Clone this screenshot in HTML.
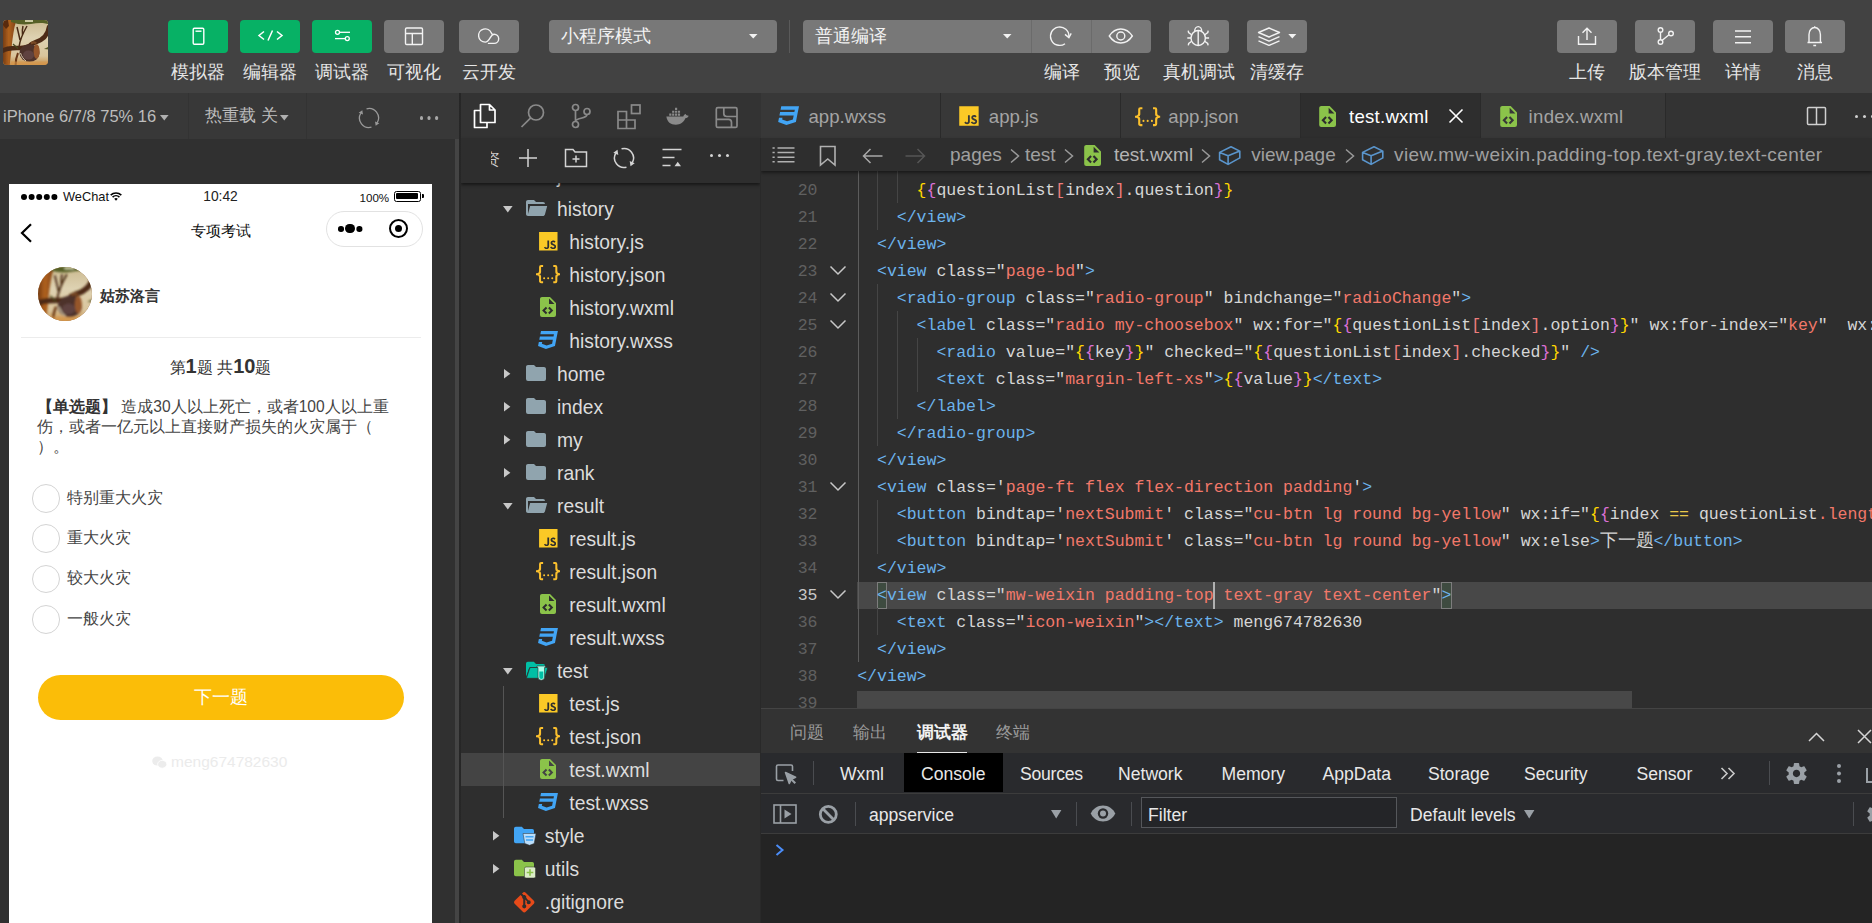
<!DOCTYPE html>
<html><head><meta charset="utf-8">
<style>
*{box-sizing:border-box;margin:0;padding:0}
html,body{width:1872px;height:923px;overflow:hidden;background:#2e2e2e;font-family:"Liberation Sans",sans-serif;}
.abs{position:absolute}
#top{position:absolute;left:0;top:0;width:1872px;height:93px;background:#424242}
.tb{position:absolute;top:20px;height:33px;width:60px;border-radius:4px;background:#787878}
.tb.g{background:#07b165}
.tb svg{position:absolute;left:0;top:0}
.tl{position:absolute;top:59px;height:26px;line-height:26px;font-size:18px;color:#e6e6e6;text-align:center;white-space:nowrap}
.sel{position:absolute;top:20px;height:33px;background:#787878;border-radius:4px;color:#f2f2f2;font-size:18px;line-height:33px;padding-left:12px}
/* simulator */
#sim{position:absolute;left:0;top:93px;width:459px;height:830px;background:#303030}
#simbar{position:absolute;left:0;top:0;width:459px;height:46px;background:#383838}
#phone{position:absolute;left:9px;top:91px;width:423px;height:740px;background:#fff;overflow:hidden}
/* explorer */
#exp{position:absolute;left:461px;top:93px;width:300px;height:830px;background:#2e2e2e;overflow:hidden}
#expicons{position:absolute;left:0;top:0;width:300px;height:45px;background:#333}
.row{position:absolute;left:0;width:299px;height:33px;line-height:35px;font-size:19.300px;color:#dcdcdc;white-space:nowrap}
/* editor */
#ed{position:absolute;left:761px;top:93px;width:1111px;height:615px;background:#2e2e2e;overflow:hidden}
#tabs{position:absolute;left:0;top:0;width:1111px;height:45px;background:#333}
.tab{position:absolute;top:0;height:45px;background:#383838;color:#a4a4a4;font-size:18.600px;line-height:47px;white-space:nowrap;border-right:1px solid #2a2a2a}
.tab.act{background:#2e2e2e;color:#fff}
#crumb{position:absolute;left:0;top:45px;width:1111px;height:33px;background:#2e2e2e;color:#a0a0a0;font-size:19px;line-height:34px;white-space:nowrap;box-shadow:0 2px 3px rgba(0,0,0,.45);z-index:3}
#code{position:absolute;left:0;top:82.500px;width:1111px;height:533px;font-family:"Liberation Mono",monospace;font-size:16.500px;line-height:27px;color:#d6d6d6;white-space:pre}
.ln{position:absolute;left:0;width:1111px;height:27px}
.no{position:absolute;left:0;top:.800px;width:56.500px;text-align:right;color:#606060}
.tx{position:absolute;left:96.200px;top:.800px}
/* bottom */
#bot{position:absolute;left:761px;top:708px;width:1111px;height:215px;background:#242424;overflow:hidden}
#ptabs{position:absolute;left:0;top:0;width:1111px;height:45px;background:#333;border-top:1px solid #444}
#dtabs{position:absolute;left:0;top:45px;width:1111px;height:41px;background:#292a2d;border-bottom:1px solid #3c3c3c;color:#e8e8e8;font-size:18px;line-height:42px}
#ctool{position:absolute;left:0;top:86px;width:1111px;height:40px;background:#292a2d;border-bottom:1px solid #3c3c3c;color:#e8e8e8;font-size:18px;line-height:42px}

.rd{position:absolute;left:22.700px;width:28.800px;height:28.800px;border-radius:50%;border:1px solid #d4d4d4;background:#fff}
.rl{position:absolute;left:58px;height:24px;line-height:24px;font-size:15.750px;color:#444;white-space:nowrap}

.t{color:#6cb3ec}.a{color:#d6d6d6}.s{color:#f2786a}.y{color:#ffd700}.p{color:#da70d6}.r{color:#ef7d7d}.o{color:#e8c84a}

.pt{position:absolute;top:0;height:45px;line-height:47px;font-size:17px;color:#9a9a9a;white-space:nowrap}
#dtabs span,#ctool span{white-space:nowrap;font-size:17.600px}
</style></head><body>
<svg width="0" height="0" style="position:absolute"><defs>
<symbol id="i-av" viewBox="0 0 45 45"><defs><linearGradient id="avg" x1="0" y1="0" x2="0" y2="1"><stop offset="0" stop-color="#cbb98f"/><stop offset=".4" stop-color="#ded2b2"/><stop offset=".8" stop-color="#d9c49c"/><stop offset="1" stop-color="#c9924c"/></linearGradient><linearGradient id="avt" x1="0" y1="0" x2="1" y2="0"><stop offset="0" stop-color="#5e2c0e"/><stop offset=".5" stop-color="#b0621f"/><stop offset="1" stop-color="#7a3f16"/></linearGradient><filter id="avb" x="-10%" y="-10%" width="120%" height="120%"><feGaussianBlur stdDeviation=".7"/></filter></defs>
<rect width="45" height="45" fill="url(#avg)"/>
<g filter="url(#avb)">
<path d="M-2 -2h16l-2.500 9c-1.500 8-2.500 15-3 22l-2 18h-9z" fill="url(#avt)"/>
<path d="M0 0l5 0 1 6-3 3-3-4z" fill="#5a2c10"/>
<path d="M8 -2h39v7c-6-3-13-2-19-1-7 1-13 .5-20-2z" fill="#566026"/>
<path d="M22 0h8v2h-8z" fill="#c9c9a0"/>
<path d="M16 27c1-8 4-14 8-21M17 20c-1-5-2-9-3-13M19.500 15c-.5-4 0-7 .5-9" stroke="#4a2c14" stroke-width="1.500" fill="none"/>
<path d="M46 7c-1 8-6 13-14 15.500-2.500.8-4.500 2-6 4" stroke="#4e2a14" stroke-width="4.600" fill="none" stroke-linecap="round"/>
<path d="M-1 31c5-3.500 11-3 18-3 5 0 9-1.500 13-3" stroke="#4d2a18" stroke-width="4.600" fill="none"/>
<ellipse cx="26.500" cy="33" rx="10" ry="8.800" fill="#4e332c"/>
<ellipse cx="33.600" cy="31.500" rx="3" ry="7.300" fill="#96562a"/>
<ellipse cx="25.500" cy="35" rx="5.500" ry="4.500" fill="#5e4340"/>
<path d="M28 23.500c2-1.500 4-1.500 5 0" stroke="#7a4a28" stroke-width="2.400" fill="none"/>
<path d="M17.500 33c1 3.500 3 6 5.500 8" stroke="#e0d2b4" stroke-width=".9" fill="none"/>
<path d="M12.500 46c0-5 1-9.500 2.500-13" stroke="#6a3818" stroke-width="2" fill="none"/>
<path d="M10 24l5 4.500" stroke="#4a4a20" stroke-width="1.200"/>
<path d="M41 29l5-2.500v3z" fill="#5a5a28"/>
<path d="M8 41.500h40v6h-40z" fill="#d8964a" opacity=".6"/>
</g></symbol>
<symbol id="i-js" viewBox="0 0 24 24"><path fill="#fbc926" d="M3 3h18v18H3V3m4.730 15.040c.4.850 1.190 1.550 2.540 1.550 1.500 0 2.530-.8 2.530-2.550v-5.780h-1.700V17c0 .860-.350 1.080-.9 1.080-.58 0-.82-.4-1.090-.870l-1.380.830m5.980-.180c.5.980 1.510 1.730 3.090 1.730 1.600 0 2.800-.830 2.800-2.360 0-1.410-.81-2.040-2.250-2.660l-.42-.180c-.73-.310-1.040-.520-1.040-1.020 0-.41.310-.73.810-.73.480 0 .8.210 1.090.73l1.310-.870c-.55-.960-1.330-1.330-2.400-1.330-1.510 0-2.480.960-2.480 2.230 0 1.380.81 2.030 2.030 2.550l.42.180c.78.340 1.240.550 1.240 1.130 0 .48-.45.830-1.150.830-.83 0-1.310-.430-1.670-1.030l-1.380.8z" fill-rule="evenodd"/></symbol>
<symbol id="i-json" viewBox="0 0 24 24"><path fill="#fbc02d" d="M5 3h2v2H5v5a2 2 0 0 1-2 2 2 2 0 0 1 2 2v5h2v2H5c-1.070-.270-2-.9-2-2v-4a2 2 0 0 0-2-2H0v-2h1a2 2 0 0 0 2-2V5a2 2 0 0 1 2-2m14 0a2 2 0 0 1 2 2v4a2 2 0 0 0 2 2h1v2h-1a2 2 0 0 0-2 2v4a2 2 0 0 1-2 2h-2v-2h2v-5a2 2 0 0 1 2-2 2 2 0 0 1-2-2V5h-2V3h2m-7 12a1 1 0 0 1 1 1 1 1 0 0 1-1 1 1 1 0 0 1-1-1 1 1 0 0 1 1-1m-4 0a1 1 0 0 1 1 1 1 1 0 0 1-1 1 1 1 0 0 1-1-1 1 1 0 0 1 1-1m8 0a1 1 0 0 1 1 1 1 1 0 0 1-1 1 1 1 0 0 1-1-1 1 1 0 0 1 1-1z"/></symbol>
<symbol id="i-wxml" viewBox="0 0 24 24"><path fill="#8bc34a" fill-rule="evenodd" d="M13 9h5.500L13 3.500V9M6 2h8l6 6v12a2 2 0 0 1-2 2H6a2 2 0 0 1-2-2V4c0-1.110.89-2 2-2m.120 13.500l3.740 3.740 1.420-1.410-2.330-2.330 2.330-2.330-1.420-1.410-3.740 3.740m11.160 0l-3.740-3.740-1.420 1.410 2.330 2.330-2.330 2.330 1.420 1.410 3.740-3.740z"/></symbol>
<symbol id="i-wxss" viewBox="0 0 24 24"><path fill="#42a5f5" d="M5 3l-.65 3.340h13.590L17.500 8.500H3.920l-.66 3.330h13.590l-.76 3.810-5.480 1.810-4.750-1.810.33-1.640H2.850l-.79 4 7.850 3 9.050-3 1.200-6.030.24-1.210L21.940 3H5z"/></symbol>
<symbol id="i-fold" viewBox="0 0 24 24"><path fill="#90a4ae" d="M10 4H4c-1.110 0-2 .89-2 2v12a2 2 0 0 0 2 2h16a2 2 0 0 0 2-2V8c0-1.110-.9-2-2-2h-8l-2-2z"/></symbol>
<symbol id="i-foldo" viewBox="0 0 24 24"><path fill="#90a4ae" d="M19 20H4c-1.110 0-2-.9-2-2V6c0-1.110.89-2 2-2h6l2 2h7a2 2 0 0 1 2 2H4v10l2.140-8h17.070l-2.280 8.500c-.23.870-1.010 1.500-1.930 1.500z"/></symbol>
<symbol id="i-foldtest" viewBox="0 0 24 24"><path d="M2 5.500a1.800 1.800 0 0 1 1.800-1.800h6l2.200 2.300h7.300A1.800 1.800 0 0 1 21 7.800V9H6.800a2 2 0 0 0-1.900 1.400L2 19z" fill="#00bfa5"/><path d="M2.400 20.300L5.600 10.500a1.500 1.500 0 0 1 1.400-1h15.500a1 1 0 0 1 1 1.300l-2.800 8.400a1.600 1.600 0 0 1-1.500 1.100z" fill="#00bfa5" stroke="#2e2e2e" stroke-width=".7"/><path d="M13 8h8.500v1.600h-1v9.400a3.250 3.250 0 0 1-6.500 0V9.600h-1z" fill="#a7ffeb" stroke="#2e2e2e" stroke-width=".6"/><path d="M15.300 13.500h4v5.500a2 2 0 0 1-4 0z" fill="#00bfa5"/></symbol>
<symbol id="i-foldstyle" viewBox="0 0 24 24"><path d="M2 5.500a1.800 1.800 0 0 1 1.800-1.800h6l2.200 2.300h8.300A1.800 1.800 0 0 1 22 7.800V18.500a1.800 1.800 0 0 1-1.800 1.800H3.800A1.800 1.800 0 0 1 2 18.500z" fill="#42a5f5"/><path d="M11 10.500h13l-1.800 10-4.700 1.800-4.700-1.800z" fill="#bbdefb" stroke="#2e2e2e" stroke-width=".5"/><path d="M13.500 13h8v1.400h-8zM14 16.300h7v1.400h-7z" fill="#42a5f5"/></symbol>
<symbol id="i-foldutils" viewBox="0 0 24 24"><path d="M2 5.500a1.800 1.800 0 0 1 1.800-1.800h6l2.200 2.300h8.300A1.800 1.800 0 0 1 22 7.800V18.500a1.800 1.800 0 0 1-1.800 1.800H3.800A1.800 1.800 0 0 1 2 18.500z" fill="#8bc34a"/><rect x="12.500" y="11" width="11" height="11" rx="1.500" fill="#dcedc8" stroke="#2e2e2e" stroke-width=".5"/><path d="M17.200 13.200h1.600v2.500h2.500v1.600h-2.500v2.500h-1.600v-2.500h-2.500v-1.600h2.500z" fill="#8bc34a"/></symbol>
<symbol id="i-git" viewBox="0 0 24 24"><path fill="#e64a19" d="M2.600 10.590L8.380 4.800l1.690 1.700c-.24.850.150 1.780.93 2.230v5.540c-.6.340-1 .99-1 1.730a2 2 0 0 0 2 2 2 2 0 0 0 2-2c0-.740-.4-1.390-1-1.730V9.410l2.070 2.090c-.7.150-.7.320-.7.500a2 2 0 0 0 2 2 2 2 0 0 0 2-2 2 2 0 0 0-2-2c-.180 0-.350 0-.5.070L13.930 7.500a1.980 1.980 0 0 0-1.150-2.340c-.430-.160-.880-.2-1.280-.090L9.800 3.380l.79-.780c.78-.790 2.040-.790 2.820 0l7.990 7.990c.79.780.79 2.040 0 2.820l-7.990 7.990c-.78.790-2.040.790-2.820 0L2.600 13.410c-.79-.780-.79-2.040 0-2.820z"/></symbol>
<symbol id="i-cube" viewBox="0 0 24 24"><path d="M1.600 8.400L13 2.700L21.800 7.100V13.900L10.100 20.400L1.600 15.700zM1.600 8.400L10.100 11.800L21.800 7.100M10.100 11.800V20.400" fill="none" stroke="#5a95cc" stroke-width="1.600" stroke-linejoin="round"/></symbol>
</defs></svg>

<div id="top">
<div class="abs" style="left:3px;top:20px;width:45px;height:45px;border-radius:4px;overflow:hidden;background:#8a5a33"><svg class="abs" style="left:0;top:0" width="45" height="45"><use href="#i-av"/></svg></div>
<!-- green buttons -->
<div class="tb g" style="left:168px"><svg width="60" height="33" viewBox="0 0 60 33" fill="none" stroke="#fff" stroke-width="1.4"><rect x="25.2" y="8.3" width="10.6" height="16" rx="1.2"/><path d="M27.5 11.2h6"/></svg></div>
<div class="tb g" style="left:240px"><svg width="60" height="33" viewBox="0 0 60 33" fill="none" stroke="#fff" stroke-width="1.5"><path d="M24 11.5l-5 4 5 4M28 20.5l4.5-10M37 11.5l5 4-5 4"/></svg></div>
<div class="tb g" style="left:312px"><svg width="60" height="33" viewBox="0 0 60 33" fill="none" stroke="#fff" stroke-width="1.3"><circle cx="25.5" cy="12.3" r="2"/><path d="M27.5 12.3H38"/><circle cx="35.3" cy="18.6" r="2"/><path d="M23 18.6h10.3"/></svg></div>
<div class="tb" style="left:384px"><svg width="60" height="33" viewBox="0 0 60 33" fill="none" stroke="#f2f2f2" stroke-width="1.4"><rect x="21.5" y="8" width="17" height="16.5" rx="1.2"/><path d="M21.5 13.5h17M28.3 13.5v11"/></svg></div>
<div class="tb" style="left:459px"><svg width="60" height="33" viewBox="0 0 60 33" fill="none" stroke="#f2f2f2" stroke-width="1.4"><path d="M29.500 23.400H35.100A4.600 4.600 0 0 0 35.100 14.200C31.300 14.200 30.800 22.100 26.200 22.100A6.600 6.600 0 1 1 32.300 13L33.300 14.500" stroke-linecap="round"/></svg></div>
<div class="tl" style="left:168px;width:60px">模拟器</div>
<div class="tl" style="left:240px;width:60px">编辑器</div>
<div class="tl" style="left:312px;width:60px">调试器</div>
<div class="tl" style="left:384px;width:60px">可视化</div>
<div class="tl" style="left:459px;width:60px">云开发</div>
<div class="sel" style="left:549px;width:228px">小程序模式<svg class="abs" style="left:200px;top:14px" width="9" height="5"><path d="M0 0h8.5L4.25 4.6z" fill="#f2f2f2"/></svg></div>
<div class="abs" style="left:789px;top:20px;width:1px;height:33px;background:#5a5a5a"></div>
<div class="sel" style="left:803px;width:228px;border-radius:4px 0 0 4px">普通编译<svg class="abs" style="left:200px;top:14px" width="9" height="5"><path d="M0 0h8.5L4.25 4.6z" fill="#f2f2f2"/></svg></div>
<div class="tb" style="left:1031px;width:61px;border-radius:0;border-left:1px solid #6b6b6b;border-right:1px solid #6b6b6b"><svg width="60" height="33" viewBox="0 0 60 33" fill="none" stroke="#f2f2f2" stroke-width="1.4"><path d="M33 23.700A9.200 9.200 0 1 1 36.900 16.700"/><path d="M33 14.400L36.900 17.600L39.200 13.400"/></svg></div>
<div class="tb" style="left:1092px;width:59px;border-radius:0 4px 4px 0"><svg width="60" height="33" viewBox="0 0 60 33" fill="none" stroke="#f2f2f2" stroke-width="1.4"><path d="M17.3 16c3-4.6 7-7 11.5-7s8.500 2.400 11.500 7c-3 4.600-7 7-11.500 7s-8.500-2.400-11.500-7z"/><circle cx="28.800" cy="16" r="4"/></svg></div>
<div class="tl" style="left:1032px;width:59px">编译</div>
<div class="tl" style="left:1092px;width:59px">预览</div>
<div class="tb" style="left:1169px"><svg width="60" height="33" viewBox="0 0 60 33" fill="none" stroke="#f2f2f2" stroke-width="1.4"><ellipse cx="29.200" cy="18" rx="7.200" ry="7.500"/><path d="M29.200 10.500v15M25.700 11.200a3.500 4.600 0 0 1 7 0M22.600 14.700l-3-2.200-.4-1.900M22 18h-3.700M22.700 21.300l-3 2.200-.4 1.900M35.800 14.700l3-2.200.4-1.900M36.400 18h3.700M35.700 21.300l3 2.200.4 1.900"/></svg></div>
<div class="tl" style="left:1159px;width:80px">真机调试</div>
<div class="tb" style="left:1247px"><svg width="60" height="33" viewBox="0 0 60 33" fill="none" stroke="#f2f2f2" stroke-width="1.4" stroke-linejoin="round"><path d="M22 8l10.500 4.500L22 17l-10.500-4.500z"/><path d="M11.500 16.700L22 21.200l10.500-4.500M11.500 20.900L22 25.400l10.500-4.500"/><path d="M41.300 14h8l-4 4.400z" fill="#f2f2f2" stroke="none"/></svg></div>
<div class="tl" style="left:1247px;width:60px">清缓存</div>
<div class="tb" style="left:1557px"><svg width="60" height="33" viewBox="0 0 60 33" fill="none" stroke="#f2f2f2" stroke-width="1.4"><path d="M21.500 16v8.200h17V16M30 20V8.500M25.500 12.700L30 8.300l4.500 4.400"/></svg></div>
<div class="tb" style="left:1635px"><svg width="60" height="33" viewBox="0 0 60 33" fill="none" stroke="#f2f2f2" stroke-width="1.4"><circle cx="25.500" cy="10" r="2.300"/><circle cx="25.500" cy="22" r="2.300"/><circle cx="36" cy="13.500" r="2.300"/><path d="M25.500 12.300v7.400M34 14.700l-6.700 5.600"/></svg></div>
<div class="tb" style="left:1713px"><svg width="60" height="33" viewBox="0 0 60 33" fill="none" stroke="#f2f2f2" stroke-width="1.4"><path d="M22 11h16M22 16.800h16M22 22.700h16"/></svg></div>
<div class="tb" style="left:1785px"><svg width="60" height="33" viewBox="0 0 60 33" fill="none" stroke="#f2f2f2" stroke-width="1.4"><path d="M22.500 22.500h14.500M24 22.500v-8c0-4 2.500-7 5.700-7s5.700 3 5.700 7v8M28.300 25.500h2.800M29.700 6.300v1.200"/></svg></div>
<div class="tl" style="left:1557px;width:60px">上传</div>
<div class="tl" style="left:1625px;width:80px">版本管理</div>
<div class="tl" style="left:1713px;width:60px">详情</div>
<div class="tl" style="left:1785px;width:60px">消息</div>
</div>
<div id="sim"><div id="simbar">
<div class="abs" style="left:3px;top:0;height:46px;line-height:46px;font-size:16.500px;color:#bdbdbd;white-space:nowrap" id="devtxt">iPhone 6/7/8 75% 16</div>
<svg class="abs" style="left:160px;top:21.800px" width="9" height="6"><path d="M0 0h8.600L4.300 5.600z" fill="#b0b0b0"/></svg>
<div class="abs" style="left:188px;top:0;width:1px;height:46px;background:#333"></div>
<div class="abs" style="left:205px;top:0;height:46px;line-height:45px;font-size:17px;color:#bdbdbd;white-space:nowrap">热重载 关</div>
<svg class="abs" style="left:280px;top:21.800px" width="9" height="6"><path d="M0 0h8.600L4.300 5.600z" fill="#b0b0b0"/></svg>
<div class="abs" style="left:306px;top:0;width:1px;height:46px;background:#333"></div>
<svg class="abs" style="left:357.200px;top:13.100px" width="24" height="24" viewBox="0 0 24 24" fill="none" stroke="#9a9a9a" stroke-width="1.300"><path d="M9.540 2.820A9.500 9.500 0 0 1 20.230 16.750"/><path d="M14.460 21.180A9.500 9.500 0 0 1 3.770 7.250"/><path d="M18.700 19.800L22.300 17.300L18 15.400z" fill="#9a9a9a" stroke="none"/><path d="M5.300 4.200L1.700 6.700L6 8.600z" fill="#9a9a9a" stroke="none"/></svg>
<div class="abs" style="left:419.800px;top:23.400px;width:3.200px;height:3.200px;border-radius:50%;background:#a8a8a8;box-shadow:7.500px 0 0 #a8a8a8,15.100px 0 0 #a8a8a8"></div>
</div><div id="phone">
<!-- status bar -->
<div class="abs" style="left:12px;top:9.700px;width:6.400px;height:6.400px;border-radius:50%;background:#000;box-shadow:7.600px 0 0 #000,15.200px 0 0 #000,22.800px 0 0 #000,30.400px 0 0 #000"></div>
<div class="abs" style="left:54px;top:3px;height:20px;line-height:20px;font-size:12.800px;color:#111;white-space:nowrap">WeChat</div>
<svg class="abs" style="left:100.800px;top:8px" width="12" height="9" viewBox="0 0 14 10.500"><path d="M.8 3.600a9 9 0 0 1 12.400 0" stroke="#000" stroke-width="1.900" fill="none"/><path d="M3 6a5.800 5.800 0 0 1 8 0" stroke="#000" stroke-width="1.900" fill="none"/><path d="M4.900 8a3 3 0 0 1 4.200 0L7 10.300z" fill="#000"/></svg>
<div class="abs" style="left:0;top:3px;width:423px;height:20px;line-height:20px;font-size:13.800px;color:#222;text-align:center">10:42</div>
<div class="abs" style="left:350.500px;top:4px;height:20px;line-height:20px;font-size:11.600px;color:#111">100%</div>
<div class="abs" style="left:385px;top:6.500px;width:27px;height:11px;border:1.500px solid #000;border-radius:2.500px"><div class="abs" style="left:1px;top:1px;width:22px;height:6px;background:#000;border-radius:1px"></div></div>
<div class="abs" style="left:412.500px;top:10px;width:2px;height:4px;background:#000;border-radius:0 1px 1px 0"></div>
<!-- nav -->
<svg class="abs" style="left:11px;top:39px" width="13" height="20" viewBox="0 0 13 20"><path d="M11 1.200L2 10l9 8.800" stroke="#000" stroke-width="2.200" fill="none"/></svg>
<div class="abs" style="left:0;top:35.700px;width:423px;height:22px;line-height:22px;font-size:14.500px;color:#111;text-align:center">专项考试</div>
<div class="abs" style="left:317px;top:27px;width:97px;height:36px;border:1px solid #e2e2e2;border-radius:18px"></div>
<div class="abs" style="left:329px;top:42px;width:5.600px;height:5.600px;border-radius:50%;background:#000;box-shadow:18.400px 0 0 #000"></div>
<div class="abs" style="left:336.300px;top:40.300px;width:9.600px;height:8.800px;border-radius:4.400px;background:#000"></div>
<div class="abs" style="left:379.500px;top:35px;width:19px;height:19px;border-radius:50%;border:2.600px solid #000"></div>
<div class="abs" style="left:385.500px;top:41px;width:7px;height:7px;border-radius:50%;background:#000"></div>
<!-- user -->
<div class="abs" style="left:29px;top:83px;width:54px;height:54px;border-radius:50%;overflow:hidden;background:#8a5a33"><svg class="abs" style="left:0;top:0" width="54" height="54"><use href="#i-av"/></svg></div>
<div class="abs" style="left:91.300px;top:100.600px;height:22px;line-height:22px;font-size:15.300px;font-weight:bold;color:#333;white-space:nowrap">姑苏洛言</div>
<div class="abs" style="left:12px;top:153.300px;width:400px;height:1px;background:#ececec"></div>
<!-- question -->
<div class="abs" style="left:0;top:168.500px;width:423px;height:26px;line-height:26px;font-size:16px;color:#333;text-align:center;white-space:nowrap">第<b style="font-size:20px">1</b>题 共<b style="font-size:20px">10</b>题</div>
<div class="abs" style="left:28px;top:212.500px;width:380px;line-height:20.200px;font-size:15.600px;color:#444;white-space:nowrap"><b style="color:#333">【单选题】</b> 造成30人以上死亡，或者100人以上重<br>伤，或者一亿元以上直接财产损失的火灾属于（<br>）。</div>
<div class="rd" style="top:299.900px"></div><div class="rl" style="top:301.500px">特别重大火灾</div>
<div class="rd" style="top:340.200px"></div><div class="rl" style="top:341.900px">重大火灾</div>
<div class="rd" style="top:380.700px"></div><div class="rl" style="top:382.300px">较大火灾</div>
<div class="rd" style="top:421px"></div><div class="rl" style="top:422.600px">一般火灾</div>
<div class="abs" style="left:29px;top:490.500px;width:366px;height:45px;border-radius:23px;background:#fbbd08;color:#fff;font-size:18px;line-height:45px;text-align:center">下一题</div>
<svg class="abs" style="left:143px;top:572px" width="15" height="13" viewBox="0 0 15 13"><ellipse cx="5.500" cy="5" rx="5.300" ry="4.500" fill="#ececec"/><ellipse cx="10.200" cy="8.300" rx="4.600" ry="3.900" fill="#ececec" stroke="#fff" stroke-width=".8"/></svg>
<div class="abs" style="left:162px;top:567px;height:22px;line-height:22px;font-size:15.500px;color:#ebebeb;white-space:nowrap">meng674782630</div>
</div></div>
<div class="abs" style="left:455px;top:139px;width:4px;height:784px;background:#444"></div>
<div class="abs" style="left:459px;top:93px;width:2px;height:830px;background:linear-gradient(90deg,#2a2a2a 0,#232323 50%,#2a2a2a 100%)"></div>
<div id="exp"><div class="row" style="top:66.0px"><svg class="abs" style="left:62.7px;top:4.2px" width="24" height="24"><use href="#i-foldo"/></svg><span class="abs" style="left:96px">js</span></div><div class="row" style="top:99.0px"><svg class="abs" style="left:41.6px;top:13.500px" width="10" height="7"><path d="M0 0h9.600L4.800 6.400z" fill="#c8c8c8"/></svg><svg class="abs" style="left:62.7px;top:4.2px" width="24" height="24"><use href="#i-foldo"/></svg><span class="abs" style="left:96.0px">history</span></div><div class="row" style="top:132.0px"><svg class="abs" style="left:74.7px;top:3.8px" width="24.6" height="24.6"><use href="#i-js"/></svg><span class="abs" style="left:108.3px">history.js</span></div><div class="row" style="top:165.0px"><svg class="abs" style="left:74.9px;top:4.15px" width="24.4" height="24.4"><use href="#i-json"/></svg><span class="abs" style="left:108.3px">history.json</span></div><div class="row" style="top:198.0px"><svg class="abs" style="left:74.9px;top:4.3px" width="24" height="24"><use href="#i-wxml"/></svg><span class="abs" style="left:108.3px">history.wxml</span></div><div class="row" style="top:231.0px"><svg class="abs" style="left:75px;top:4px" width="24" height="24"><use href="#i-wxss"/></svg><span class="abs" style="left:108.3px">history.wxss</span></div><div class="row" style="top:264.0px"><svg class="abs" style="left:43.1px;top:11.500px" width="7" height="10"><path d="M0 0v9.600L6.400 4.800z" fill="#c8c8c8"/></svg><svg class="abs" style="left:62.7px;top:4.2px" width="24" height="24"><use href="#i-fold"/></svg><span class="abs" style="left:96.0px">home</span></div><div class="row" style="top:297.0px"><svg class="abs" style="left:43.1px;top:11.500px" width="7" height="10"><path d="M0 0v9.600L6.400 4.800z" fill="#c8c8c8"/></svg><svg class="abs" style="left:62.7px;top:4.2px" width="24" height="24"><use href="#i-fold"/></svg><span class="abs" style="left:96.0px">index</span></div><div class="row" style="top:330.0px"><svg class="abs" style="left:43.1px;top:11.500px" width="7" height="10"><path d="M0 0v9.600L6.400 4.800z" fill="#c8c8c8"/></svg><svg class="abs" style="left:62.7px;top:4.2px" width="24" height="24"><use href="#i-fold"/></svg><span class="abs" style="left:96.0px">my</span></div><div class="row" style="top:363.0px"><svg class="abs" style="left:43.1px;top:11.500px" width="7" height="10"><path d="M0 0v9.600L6.400 4.800z" fill="#c8c8c8"/></svg><svg class="abs" style="left:62.7px;top:4.2px" width="24" height="24"><use href="#i-fold"/></svg><span class="abs" style="left:96.0px">rank</span></div><div class="row" style="top:396.0px"><svg class="abs" style="left:41.6px;top:13.500px" width="10" height="7"><path d="M0 0h9.600L4.800 6.400z" fill="#c8c8c8"/></svg><svg class="abs" style="left:62.7px;top:4.2px" width="24" height="24"><use href="#i-foldo"/></svg><span class="abs" style="left:96.0px">result</span></div><div class="row" style="top:429.0px"><svg class="abs" style="left:74.7px;top:3.8px" width="24.6" height="24.6"><use href="#i-js"/></svg><span class="abs" style="left:108.3px">result.js</span></div><div class="row" style="top:462.0px"><svg class="abs" style="left:74.9px;top:4.15px" width="24.4" height="24.4"><use href="#i-json"/></svg><span class="abs" style="left:108.3px">result.json</span></div><div class="row" style="top:495.0px"><svg class="abs" style="left:74.9px;top:4.3px" width="24" height="24"><use href="#i-wxml"/></svg><span class="abs" style="left:108.3px">result.wxml</span></div><div class="row" style="top:528.0px"><svg class="abs" style="left:75px;top:4px" width="24" height="24"><use href="#i-wxss"/></svg><span class="abs" style="left:108.3px">result.wxss</span></div><div class="row" style="top:561.0px"><svg class="abs" style="left:41.6px;top:13.500px" width="10" height="7"><path d="M0 0h9.600L4.800 6.400z" fill="#c8c8c8"/></svg><svg class="abs" style="left:62.7px;top:4.2px" width="24" height="24"><use href="#i-foldtest"/></svg><span class="abs" style="left:96.0px">test</span></div><div class="row" style="top:594.0px"><svg class="abs" style="left:74.7px;top:3.8px" width="24.6" height="24.6"><use href="#i-js"/></svg><span class="abs" style="left:108.3px">test.js</span></div><div class="row" style="top:627.0px"><svg class="abs" style="left:74.9px;top:4.15px" width="24.4" height="24.4"><use href="#i-json"/></svg><span class="abs" style="left:108.3px">test.json</span></div><div class="row" style="top:660.0px;background:#444"><svg class="abs" style="left:74.9px;top:4.3px" width="24" height="24"><use href="#i-wxml"/></svg><span class="abs" style="left:108.3px">test.wxml</span></div><div class="row" style="top:693.0px"><svg class="abs" style="left:75px;top:4px" width="24" height="24"><use href="#i-wxss"/></svg><span class="abs" style="left:108.3px">test.wxss</span></div><div class="row" style="top:726.0px"><svg class="abs" style="left:31.6px;top:11.500px" width="7" height="10"><path d="M0 0v9.600L6.400 4.800z" fill="#c8c8c8"/></svg><svg class="abs" style="left:50.6px;top:4.2px" width="24" height="24"><use href="#i-foldstyle"/></svg><span class="abs" style="left:83.8px">style</span></div><div class="row" style="top:759.0px"><svg class="abs" style="left:31.6px;top:11.500px" width="7" height="10"><path d="M0 0v9.600L6.400 4.800z" fill="#c8c8c8"/></svg><svg class="abs" style="left:50.6px;top:4.2px" width="24" height="24"><use href="#i-foldutils"/></svg><span class="abs" style="left:83.8px">utils</span></div><div class="row" style="top:792.0px"><svg class="abs" style="left:51px;top:4.9px" width="24.5" height="24.5"><use href="#i-git"/></svg><span class="abs" style="left:83.8px">.gitignore</span></div><div class="abs" style="left:41.500px;top:593px;width:1px;height:131.500px;background:#555"></div><div id="expicons">
<svg class="abs" style="left:10px;top:9px" width="28" height="28" viewBox="0 0 28 28" fill="none" stroke="#fff" stroke-width="1.700" stroke-linejoin="round"><path d="M9.500 2.500h9l5.500 5.500v12.500h-14.500zM18.500 2.500v5.500h5.500"/><path d="M9.500 8.500h-6v17h12.500v-5"/></svg>
<svg class="abs" style="left:58px;top:9px" width="28" height="28" viewBox="0 0 28 28" fill="none" stroke="#8a8a8a" stroke-width="1.700"><circle cx="17" cy="10.500" r="7.500"/><path d="M11.700 15.800L2.500 25"/></svg>
<svg class="abs" style="left:106px;top:9px" width="28" height="28" viewBox="0 0 28 28" fill="none" stroke="#8a8a8a" stroke-width="1.700"><circle cx="8.500" cy="5.500" r="3"/><circle cx="8.500" cy="22.500" r="3"/><circle cx="20" cy="9.500" r="3"/><path d="M8.500 8.500v11M20 12.500c0 4.500-11.500 3-11.500 7"/></svg>
<svg class="abs" style="left:154px;top:9px" width="28" height="28" viewBox="0 0 28 28" fill="none" stroke="#8a8a8a" stroke-width="1.700"><path d="M3 9.500h8.500v8.500h8.500v8.500h-17zM11.500 18v8.500M3 18h8.500"/><rect x="16.500" y="3" width="8.500" height="8.500"/></svg>
<svg class="abs" style="left:203.500px;top:14px" width="25" height="19" viewBox="0 0 30 23" fill="#8a8a8a"><path d="M1.500 11.500h20.500c.5-2 1.800-2.800 3-3 .3 1.200 1.200 2 3.500 2-.5 1.800-2 3-4 3.200-2 5-6 7.800-11.500 7.800-6.500 0-10.500-3.500-11.500-10z"/><path d="M5 8h2.600v2.600h-2.600zM8.500 8h2.600v2.600h-2.600zM12 8h2.600v2.600h-2.600zM8.500 4.500h2.600v2.600h-2.600zM12 4.500h2.600v2.600h-2.600zM12 1h2.600v2.600h-2.600zM15.500 8h2.600v2.600h-2.600zM15.500 4.500h2.600v2.600h-2.600z"/></svg>
<svg class="abs" style="left:252px;top:9px" width="28" height="28" viewBox="0 0 28 28" fill="none" stroke="#8a8a8a" stroke-width="1.700"><rect x="3.300" y="5.700" width="20.700" height="19.700" rx="1.500"/><path d="M10.800 5.700v5.800q0 3 3 3h10.200M3.300 17.400h12.200q3 0 3 3v5"/></svg>
</div>
<div class="abs" style="left:0;top:45px;width:299px;height:45px;background:#2e2e2e;box-shadow:0 2px 3px rgba(0,0,0,.5)">
<div class="abs" style="left:29.500px;top:7px;width:10px;height:30px;overflow:hidden"><span class="abs" style="left:-8px;top:0;font-size:17px;line-height:30px;color:#ccc;white-space:nowrap">资</span></div>
<svg class="abs" style="left:57px;top:10px" width="20" height="20" fill="none" stroke="#d4d4d4" stroke-width="1.500"><path d="M10 1v18M1 10h18"/></svg>
<svg class="abs" style="left:103px;top:9px" width="24" height="22" viewBox="0 0 24 22" fill="none" stroke="#d4d4d4" stroke-width="1.500"><path d="M1.500 2.500h7.500l2 2.500h11.500v14.500h-21z"/><path d="M12 8.500v7M8.500 12h7"/></svg>
<svg class="abs" style="left:151px;top:8px" width="24" height="24" viewBox="0 0 24 24" fill="none" stroke="#d4d4d4" stroke-width="1.500"><path d="M9.540 2.820A9.500 9.500 0 0 1 20.230 16.750"/><path d="M14.460 21.180A9.500 9.500 0 0 1 3.770 7.250"/><path d="M18.500 20.200L22.700 17.200L17.700 15.100z" fill="#d4d4d4" stroke="none"/><path d="M5.500 3.800L1.300 6.800L6.300 8.900z" fill="#d4d4d4" stroke="none"/></svg>
<svg class="abs" style="left:200px;top:8.500px" width="22" height="22" viewBox="0 0 22 22" fill="none" stroke="#d4d4d4" stroke-width="1.500"><path d="M1.500 2.500h19M1.500 10.500h12M1.500 18.500h8"/><path d="M13.500 19.200h6.500l-3.250-4.400z" fill="#d4d4d4" stroke="none"/></svg>
<div class="abs" style="left:249px;top:16px;width:3.400px;height:3.400px;border-radius:50%;background:#d4d4d4;box-shadow:8px 0 0 #d4d4d4,16px 0 0 #d4d4d4"></div>
</div>
</div>
<div class="abs" style="left:760px;top:138px;width:1px;height:785px;background:#292929"></div>
<div id="ed"><div id="tabs"><div class="tab" style="left:0;width:180px"><svg class="abs" style="left:14.8px;top:10.35px" width="25.2" height="25.2"><use href="#i-wxss"/></svg><span class="abs" style="left:47.500px">app.wxss</span></div><div class="tab" style="left:180px;width:180px"><svg class="abs" style="left:14.8px;top:10.3px" width="25.9" height="25.9"><use href="#i-js"/></svg><span class="abs" style="left:47.800px">app.js</span></div><div class="tab" style="left:360px;width:180px"><svg class="abs" style="left:14.4px;top:10.6px" width="25.4" height="25.4"><use href="#i-json"/></svg><span class="abs" style="left:47.300px">app.json</span></div><div class="tab act" style="left:540px;width:180px"><svg class="abs" style="left:14.4px;top:10.5px" width="25.2" height="25.2"><use href="#i-wxml"/></svg><span class="abs" style="left:48px;letter-spacing:.250px">test.wxml</span><svg class="abs" style="left:147px;top:15px" width="16" height="16" fill="none" stroke="#fff" stroke-width="1.600"><path d="M1.500 1.500l13 13M14.500 1.500l-13 13"/></svg></div><div class="tab" style="left:720px;width:185px"><svg class="abs" style="left:14.6px;top:10.5px" width="25.2" height="25.2"><use href="#i-wxml"/></svg><span class="abs" style="left:47.600px;letter-spacing:.300px">index.wxml</span></div><svg class="abs" style="left:1045px;top:13px" width="22" height="20" fill="none" stroke="#d0d0d0" stroke-width="1.500"><rect x="1.500" y="1.500" width="18" height="17" rx="1"/><path d="M10.500 1.500v17"/></svg><div class="abs" style="left:1093.500px;top:22px;width:3.400px;height:3.400px;border-radius:50%;background:#d0d0d0;box-shadow:8px 0 0 #d0d0d0,16px 0 0 #d0d0d0"></div></div><div id="crumb"><svg class="abs" style="left:11px;top:8px" width="24" height="18" fill="none" stroke="#b0b0b0" stroke-width="1.500"><path d="M5.500 2h17M5.500 6.600h17M5.500 11.200h17M5.500 15.800h17"/><path d="M.5 2h2.200M.5 6.600h2.200M.5 11.200h2.200M.5 15.800h2.200"/></svg><svg class="abs" style="left:58px;top:7px" width="18" height="22" fill="none" stroke="#b0b0b0" stroke-width="1.600"><path d="M1.500 1.500h14.500v18.500l-7.250-6-7.250 6z"/></svg><svg class="abs" style="left:101px;top:10px" width="22" height="16" fill="none" stroke="#a8a8a8" stroke-width="1.500"><path d="M20.500 8h-19M8.500 1l-7 7 7 7"/></svg><svg class="abs" style="left:143px;top:10px" width="22" height="16" fill="none" stroke="#565656" stroke-width="1.500"><path d="M1.500 8h19M13.500 1l7 7-7 7"/></svg><span class="abs" style="left:189px">pages</span><svg class="abs" style="left:248.5px;top:9.500px" width="10" height="16" fill="none" stroke="#9a9a9a" stroke-width="1.500"><path d="M1 1.500l7.500 6.500-7.500 6.500"/></svg><span class="abs" style="left:264px">test</span><svg class="abs" style="left:303px;top:9.500px" width="10" height="16" fill="none" stroke="#9a9a9a" stroke-width="1.500"><path d="M1 1.500l7.500 6.500-7.500 6.500"/></svg><svg class="abs" style="left:319.4px;top:4.6px" width="25.2" height="25.2"><use href="#i-wxml"/></svg><span class="abs" style="left:353px;color:#b4b4b4">test.wxml</span><svg class="abs" style="left:439.5px;top:9.500px" width="10" height="16" fill="none" stroke="#9a9a9a" stroke-width="1.500"><path d="M1 1.500l7.500 6.500-7.500 6.500"/></svg><svg class="abs" style="left:457.300px;top:5.800px" width="24" height="24"><use href="#i-cube"/></svg><span class="abs" style="left:490.200px">view.page</span><svg class="abs" style="left:584px;top:9.500px" width="10" height="16" fill="none" stroke="#9a9a9a" stroke-width="1.500"><path d="M1 1.500l7.500 6.500-7.500 6.500"/></svg><svg class="abs" style="left:600.300px;top:5.800px" width="24" height="24"><use href="#i-cube"/></svg><span class="abs" style="left:633px;letter-spacing:.400px">view.mw-weixin.padding-top.text-gray.text-center</span></div><div id="code"><div class="abs" style="left:96.5px;top:-6px;width:1px;height:7px;background:#5c5c5c"></div><div class="abs" style="left:116.3px;top:-6px;width:1px;height:7px;background:#454545"></div><div class="abs" style="left:136.1px;top:-6px;width:1px;height:7px;background:#454545"></div><div class="abs" style="left:96px;top:406.0px;width:1015px;height:27px;background:#484848"></div><div class="abs" style="left:115.5px;top:406.0px;width:10.9px;height:27px;background:#3e4b40;border:1px solid #7d7d7d"></div><div class="abs" style="left:679.8000000000001px;top:406.0px;width:10.9px;height:27px;background:#3e4b40;border:1px solid #7d7d7d"></div><div class="abs" style="left:96.5px;top:0.5px;width:1px;height:27px;background:#5c5c5c"></div><div class="abs" style="left:116.3px;top:0.5px;width:1px;height:27px;background:#454545"></div><div class="abs" style="left:136.1px;top:0.5px;width:1px;height:27px;background:#454545"></div><div class="abs" style="left:96.5px;top:27.5px;width:1px;height:27px;background:#5c5c5c"></div><div class="abs" style="left:116.3px;top:27.5px;width:1px;height:27px;background:#454545"></div><div class="abs" style="left:96.5px;top:54.5px;width:1px;height:27px;background:#5c5c5c"></div><div class="abs" style="left:96.5px;top:81.5px;width:1px;height:27px;background:#5c5c5c"></div><div class="abs" style="left:96.5px;top:108.5px;width:1px;height:27px;background:#5c5c5c"></div><div class="abs" style="left:116.3px;top:108.5px;width:1px;height:27px;background:#454545"></div><div class="abs" style="left:96.5px;top:135.5px;width:1px;height:27px;background:#5c5c5c"></div><div class="abs" style="left:116.3px;top:135.5px;width:1px;height:27px;background:#454545"></div><div class="abs" style="left:136.1px;top:135.5px;width:1px;height:27px;background:#454545"></div><div class="abs" style="left:96.5px;top:162.5px;width:1px;height:27px;background:#5c5c5c"></div><div class="abs" style="left:116.3px;top:162.5px;width:1px;height:27px;background:#454545"></div><div class="abs" style="left:136.1px;top:162.5px;width:1px;height:27px;background:#454545"></div><div class="abs" style="left:155.9px;top:162.5px;width:1px;height:27px;background:#454545"></div><div class="abs" style="left:96.5px;top:189.5px;width:1px;height:27px;background:#5c5c5c"></div><div class="abs" style="left:116.3px;top:189.5px;width:1px;height:27px;background:#454545"></div><div class="abs" style="left:136.1px;top:189.5px;width:1px;height:27px;background:#454545"></div><div class="abs" style="left:155.9px;top:189.5px;width:1px;height:27px;background:#454545"></div><div class="abs" style="left:96.5px;top:216.5px;width:1px;height:27px;background:#5c5c5c"></div><div class="abs" style="left:116.3px;top:216.5px;width:1px;height:27px;background:#454545"></div><div class="abs" style="left:136.1px;top:216.5px;width:1px;height:27px;background:#454545"></div><div class="abs" style="left:96.5px;top:243.5px;width:1px;height:27px;background:#5c5c5c"></div><div class="abs" style="left:116.3px;top:243.5px;width:1px;height:27px;background:#454545"></div><div class="abs" style="left:96.5px;top:270.5px;width:1px;height:27px;background:#5c5c5c"></div><div class="abs" style="left:96.5px;top:297.5px;width:1px;height:27px;background:#5c5c5c"></div><div class="abs" style="left:96.5px;top:324.5px;width:1px;height:27px;background:#5c5c5c"></div><div class="abs" style="left:116.3px;top:324.5px;width:1px;height:27px;background:#454545"></div><div class="abs" style="left:96.5px;top:351.5px;width:1px;height:27px;background:#5c5c5c"></div><div class="abs" style="left:116.3px;top:351.5px;width:1px;height:27px;background:#454545"></div><div class="abs" style="left:96.5px;top:378.5px;width:1px;height:27px;background:#5c5c5c"></div><div class="abs" style="left:96.5px;top:405.5px;width:1px;height:27px;background:#5c5c5c"></div><div class="abs" style="left:96.5px;top:432.5px;width:1px;height:27px;background:#5c5c5c"></div><div class="abs" style="left:116.3px;top:432.5px;width:1px;height:27px;background:#454545"></div><div class="abs" style="left:96.5px;top:459.5px;width:1px;height:27px;background:#5c5c5c"></div><div class="ln" style="top:0.5px"><span class="no">20</span><span class="tx">      <span class="y">{</span><span class="p">{</span><span class="a">questionList</span><span class="r">[</span><span class="a">index</span><span class="r">]</span><span class="a">.question</span><span class="p">}</span><span class="y">}</span></span></div><div class="ln" style="top:27.5px"><span class="no">21</span><span class="tx">    <span class="t">&lt;/view&gt;</span></span></div><div class="ln" style="top:54.5px"><span class="no">22</span><span class="tx">  <span class="t">&lt;/view&gt;</span></span></div><div class="ln" style="top:81.5px"><span class="no">23</span><svg class="abs" style="left:68px;top:8px" width="18" height="11" fill="none" stroke="#c8c8c8" stroke-width="1.500"><path d="M1.500 1.500l7.500 7.500 7.500-7.500"/></svg><span class="tx">  <span class="t">&lt;view</span><span class="a"> class="</span><span class="s">page-bd</span><span class="a">"</span><span class="t">&gt;</span></span></div><div class="ln" style="top:108.5px"><span class="no">24</span><svg class="abs" style="left:68px;top:8px" width="18" height="11" fill="none" stroke="#c8c8c8" stroke-width="1.500"><path d="M1.500 1.500l7.500 7.500 7.500-7.500"/></svg><span class="tx">    <span class="t">&lt;radio-group</span><span class="a"> class="</span><span class="s">radio-group</span><span class="a">" bindchange="</span><span class="s">radioChange</span><span class="a">"</span><span class="t">&gt;</span></span></div><div class="ln" style="top:135.5px"><span class="no">25</span><svg class="abs" style="left:68px;top:8px" width="18" height="11" fill="none" stroke="#c8c8c8" stroke-width="1.500"><path d="M1.500 1.500l7.500 7.500 7.500-7.500"/></svg><span class="tx">      <span class="t">&lt;label</span><span class="a"> class="</span><span class="s">radio my-choosebox</span><span class="a">" wx:for="</span><span class="y">{</span><span class="p">{</span><span class="a">questionList</span><span class="r">[</span><span class="a">index</span><span class="r">]</span><span class="a">.option</span><span class="p">}</span><span class="y">}</span><span class="a">" wx:for-index="</span><span class="s">key</span><span class="a">"  wx:</span></span></div><div class="ln" style="top:162.5px"><span class="no">26</span><span class="tx">        <span class="t">&lt;radio</span><span class="a"> value="</span><span class="y">{</span><span class="p">{</span><span class="a">key</span><span class="p">}</span><span class="y">}</span><span class="a">" checked="</span><span class="y">{</span><span class="p">{</span><span class="a">questionList</span><span class="r">[</span><span class="a">index</span><span class="r">]</span><span class="a">.checked</span><span class="p">}</span><span class="y">}</span><span class="a">" </span><span class="t">/&gt;</span></span></div><div class="ln" style="top:189.5px"><span class="no">27</span><span class="tx">        <span class="t">&lt;text</span><span class="a"> class="</span><span class="s">margin-left-xs</span><span class="a">"</span><span class="t">&gt;</span><span class="y">{</span><span class="p">{</span><span class="a">value</span><span class="p">}</span><span class="y">}</span><span class="t">&lt;/text&gt;</span></span></div><div class="ln" style="top:216.5px"><span class="no">28</span><span class="tx">      <span class="t">&lt;/label&gt;</span></span></div><div class="ln" style="top:243.5px"><span class="no">29</span><span class="tx">    <span class="t">&lt;/radio-group&gt;</span></span></div><div class="ln" style="top:270.5px"><span class="no">30</span><span class="tx">  <span class="t">&lt;/view&gt;</span></span></div><div class="ln" style="top:297.5px"><span class="no">31</span><svg class="abs" style="left:68px;top:8px" width="18" height="11" fill="none" stroke="#c8c8c8" stroke-width="1.500"><path d="M1.500 1.500l7.500 7.500 7.500-7.500"/></svg><span class="tx">  <span class="t">&lt;view</span><span class="a"> class='</span><span class="s">page-ft flex flex-direction padding</span><span class="a">'</span><span class="t">&gt;</span></span></div><div class="ln" style="top:324.5px"><span class="no">32</span><span class="tx">    <span class="t">&lt;button</span><span class="a"> bindtap='</span><span class="s">nextSubmit</span><span class="a">' class="</span><span class="s">cu-btn lg round bg-yellow</span><span class="a">" wx:if="</span><span class="y">{</span><span class="p">{</span><span class="a">index </span><span class="o">==</span><span class="a"> questionList</span><span class="s">.length</span></span></div><div class="ln" style="top:351.5px"><span class="no">33</span><span class="tx">    <span class="t">&lt;button</span><span class="a"> bindtap='</span><span class="s">nextSubmit</span><span class="a">' class="</span><span class="s">cu-btn lg round bg-yellow</span><span class="a">" wx:else</span><span class="t">&gt;</span><span class="a" style="display:inline-block;width:53.600px;height:27px;vertical-align:top;overflow:hidden;font-size:17.800px">下一题</span><span class="t">&lt;/button&gt;</span></span></div><div class="ln" style="top:378.5px"><span class="no">34</span><span class="tx">  <span class="t">&lt;/view&gt;</span></span></div><div class="ln" style="top:405.5px"><span class="no" style="color:#c8c8c8">35</span><svg class="abs" style="left:68px;top:8px" width="18" height="11" fill="none" stroke="#c8c8c8" stroke-width="1.500"><path d="M1.500 1.500l7.500 7.500 7.500-7.500"/></svg><span class="tx">  <span class="t">&lt;view</span><span class="a"> class="</span><span class="s">mw-weixin padding-top text-gray text-center</span><span class="a">"</span><span class="t">&gt;</span></span></div><div class="ln" style="top:432.5px"><span class="no">36</span><span class="tx">    <span class="t">&lt;text</span><span class="a"> class="</span><span class="s">icon-weixin</span><span class="a">"</span><span class="t">&gt;</span><span class="t">&lt;/text&gt;</span><span class="a"> meng674782630</span></span></div><div class="ln" style="top:459.5px"><span class="no">37</span><span class="tx">  <span class="t">&lt;/view&gt;</span></span></div><div class="ln" style="top:486.5px"><span class="no">38</span><span class="tx"><span class="t">&lt;/view&gt;</span></span></div><div class="ln" style="top:513.5px"><span class="no">39</span></div><div class="abs" style="left:451.6px;top:406.0px;width:2px;height:27px;background:#b0b0b0"></div><div class="abs" style="left:96px;top:515px;width:775px;height:18px;background:#484848"></div></div></div>
<div id="bot"><div id="ptabs">
<span class="pt" style="left:29px">问题</span>
<span class="pt" style="left:91.5px">输出</span>
<span class="pt" style="left:155.5px;color:#f2f2f2;font-weight:bold">调试器</span>
<span class="pt" style="left:234.5px">终端</span>
<div class="abs" style="left:156px;top:43px;width:49.500px;height:1.500px;background:#e8e8e8"></div>
<svg class="abs" style="left:1047px;top:22.500px" width="17" height="10" fill="none" stroke="#d4d4d4" stroke-width="1.500"><path d="M1 9l7.500-7.500 7.500 7.500"/></svg>
<svg class="abs" style="left:1096px;top:20px" width="16" height="16" fill="none" stroke="#d4d4d4" stroke-width="1.500"><path d="M1 1l13 13M14 1l-13 13"/></svg>
</div><div id="dtabs">
<svg class="abs" style="left:13.5px;top:10px" width="24" height="22" viewBox="0 0 24 22" fill="none" stroke="#9aa0a6" stroke-width="1.600"><path d="M8.500 17.500h-5.500a1.500 1.500 0 0 1-1.500-1.500v-12.500a1.500 1.500 0 0 1 1.500-1.500h13a1.500 1.500 0 0 1 1.500 1.500v4.500"/><path d="M10.500 9.500l3.800 11 2-4.300 4.300-2z" fill="#9aa0a6" stroke-linejoin="round"/><path d="M16.300 16.200l4 4" stroke-width="2"/></svg>
<div class="abs" style="left:52px;top:8px;width:1px;height:24px;background:#4a4c50"></div>
<span class="abs" style="left:79px;top:0">Wxml</span>
<div class="abs" style="left:143px;top:0;width:99px;height:39px;background:#000"></div>
<span class="abs" style="left:160px;top:0">Console</span><span class="abs" style="left:259px;top:0;letter-spacing:-.250px">Sources</span><span class="abs" style="left:357px;top:0">Network</span><span class="abs" style="left:460.5px;top:0">Memory</span><span class="abs" style="left:561.5px;top:0">AppData</span><span class="abs" style="left:667px;top:0">Storage</span><span class="abs" style="left:763px;top:0">Security</span><span class="abs" style="left:875.5px;top:0">Sensor</span>
<svg class="abs" style="left:959px;top:14px" width="16" height="13" fill="none" stroke="#c8c8c8" stroke-width="1.600"><path d="M1.500 1l5.500 5.500-5.500 5.500M8.500 1l5.500 5.500-5.500 5.500"/></svg>
<div class="abs" style="left:1007.5px;top:8px;width:1px;height:24px;background:#4a4c50"></div>
<svg class="abs" style="left:1022.5px;top:7.500px" width="25" height="25" viewBox="0 0 24 24"><path fill="#9aa0a6" d="M19.430 12.980c.040-.320.070-.640.070-.980s-.030-.660-.070-.980l2.110-1.650c.190-.150.240-.420.120-.640l-2-3.460c-.120-.220-.390-.300-.610-.220l-2.490 1c-.520-.400-1.080-.730-1.690-.980l-.380-2.650A.488.488 0 0 0 14 2h-4c-.250 0-.460.180-.490.420l-.380 2.650c-.610.250-1.170.590-1.690.980l-2.490-1c-.230-.090-.490 0-.610.220l-2 3.460c-.130.220-.070.490.120.640l2.110 1.650c-.040.320-.070.650-.070.980s.030.660.070.980l-2.110 1.650c-.190.150-.240.420-.120.640l2 3.460c.120.220.390.300.610.220l2.490-1c.520.400 1.080.730 1.690.980l.380 2.650c.030.240.240.420.490.420h4c.250 0 .460-.180.490-.420l.380-2.650c.610-.250 1.170-.590 1.690-.980l2.490 1c.230.090.490 0 .610-.220l2-3.460c.120-.220.070-.490-.120-.640l-2.110-1.650zM12 15.500c-1.930 0-3.500-1.570-3.500-3.500s1.570-3.500 3.500-3.500 3.500 1.570 3.500 3.500-1.570 3.500-3.500 3.500z"/></svg>
<div class="abs" style="left:1075.8px;top:10.500px;width:4.400px;height:4.400px;border-radius:50%;background:#9aa0a6;box-shadow:0 7.500px 0 #9aa0a6,0 15px 0 #9aa0a6"></div>
<div class="abs" style="left:1105px;top:15px;width:10px;height:15px;border:2px solid #9aa0a6;border-top:none"></div>
</div><div id="ctool">
<svg class="abs" style="left:11.5px;top:9.500px" width="24" height="20" fill="none" stroke="#9aa0a6" stroke-width="1.600"><rect x="1" y="1" width="22" height="18"/><path d="M7.500 1v18"/><path d="M11.500 5.500l7 4.500-7 4.500z" fill="#9aa0a6" stroke="none"/></svg>
<svg class="abs" style="left:56.5px;top:9.500px" width="21" height="21" fill="none" stroke="#9aa0a6" stroke-width="2.800"><circle cx="10.300" cy="10.300" r="8"/><path d="M4.600 4.600l11.400 11.400"/></svg>
<div class="abs" style="left:94px;top:8px;width:1px;height:24px;background:#4a4c50"></div>
<span class="abs" style="left:108px;top:0">appservice</span>
<svg class="abs" style="left:289.5px;top:15.500px" width="11" height="9"><path d="M0 0h10.400L5.200 8.600z" fill="#9aa0a6"/></svg>
<div class="abs" style="left:314.5px;top:8px;width:1px;height:24px;background:#4a4c50"></div>
<svg class="abs" style="left:329px;top:11px" width="26" height="17" viewBox="0 0 26 17"><path d="M13 .5C7.500.5 2.800 3.800.8 8.500c2 4.700 6.700 8 12.200 8s10.200-3.300 12.200-8C23.200 3.800 18.500.5 13 .5z" fill="#9aa0a6"/><circle cx="13" cy="8.500" r="5.200" fill="#292a2d"/><circle cx="13" cy="8.500" r="3" fill="#9aa0a6"/></svg>
<div class="abs" style="left:370px;top:8px;width:1px;height:24px;background:#4a4c50"></div>
<div class="abs" style="left:379.5px;top:3px;width:256.500px;height:31px;border:1.500px solid #55575b;background:#242528"></div>
<span class="abs" style="left:387px;top:0">Filter</span>
<span class="abs" style="left:649px;top:0">Default levels</span>
<svg class="abs" style="left:762.5px;top:15.500px" width="11" height="9"><path d="M0 0h10.400L5.200 8.600z" fill="#9aa0a6"/></svg>
<div class="abs" style="left:1092px;top:8px;width:1px;height:24px;background:#4a4c50"></div>
<svg class="abs" style="left:1104px;top:7.500px" width="25" height="25" viewBox="0 0 24 24"><path fill="#9aa0a6" d="M19.430 12.980c.040-.320.070-.640.070-.980s-.030-.660-.070-.980l2.110-1.650c.190-.150.240-.420.120-.640l-2-3.460c-.120-.220-.390-.300-.610-.220l-2.490 1c-.520-.400-1.080-.730-1.690-.980l-.380-2.650A.488.488 0 0 0 14 2h-4c-.250 0-.460.180-.490.420l-.380 2.650c-.610.250-1.170.590-1.690.980l-2.490-1c-.230-.090-.490 0-.610.220l-2 3.460c-.130.220-.070.490.120.640l2.110 1.650c-.040.320-.070.650-.070.980s.030.660.070.980l-2.110 1.650c-.190.150-.240.420-.120.640l2 3.460c.120.220.390.300.610.220l2.490-1c.520.400 1.080.730 1.690.980l.380 2.650c.030.240.240.420.490.420h4c.250 0 .460-.180.490-.420l.380-2.650c.610-.250 1.170-.590 1.690-.980l2.490 1c.230.090.490 0 .610-.220l2-3.460c.120-.220.070-.490-.120-.640l-2.110-1.650zM12 15.500c-1.930 0-3.500-1.570-3.500-3.500s1.570-3.500 3.500-3.500 3.500 1.570 3.500 3.500-1.570 3.500-3.500 3.500z"/></svg>
</div><svg class="abs" style="left:14px;top:136px" width="10" height="12" fill="none" stroke="#4b8df8" stroke-width="2"><path d="M1.500 1l6 5-6 5"/></svg></div>
</body></html>
